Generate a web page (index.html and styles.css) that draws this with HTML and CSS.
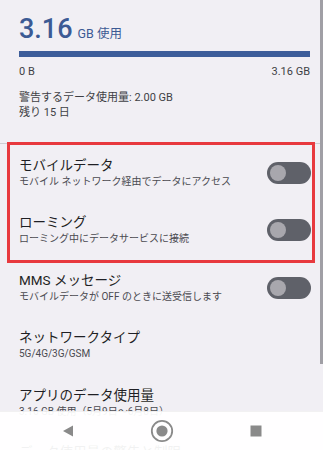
FILE: index.html
```html
<!DOCTYPE html>
<html lang="ja">
<head>
<meta charset="utf-8">
<link rel="stylesheet" href="styles.css">
</head>
<body>
<div class="page">
  <section class="usage">
    <div class="amount"><span class="num">3.16</span><span class="unit">GB 使用</span></div>
    <div class="bar"></div>
    <div class="scale"><span>0 B</span><span>3.16 GB</span></div>
    <div class="warn">
      <div>警告するデータ使用量: 2.00 GB</div>
      <div>残り 15 日</div>
    </div>
  </section>
  <div class="divider"></div>
  <div class="group highlight">
    <div class="row">
      <div class="text"><div class="title">モバイルデータ</div><div class="sub">モバイル ネットワーク経由でデータにアクセス</div></div>
      <div class="switch"><span class="thumb"></span></div>
    </div>
    <div class="row">
      <div class="text"><div class="title">ローミング</div><div class="sub">ローミング中にデータサービスに接続</div></div>
      <div class="switch"><span class="thumb"></span></div>
    </div>
  </div>
  <div class="row">
    <div class="text"><div class="title">MMS メッセージ</div><div class="sub">モバイルデータが OFF のときに送受信します</div></div>
    <div class="switch"><span class="thumb"></span></div>
  </div>
  <div class="row">
    <div class="text"><div class="title">ネットワークタイプ</div><div class="sub">5G/4G/3G/GSM</div></div>
  </div>
  <div class="row">
    <div class="text"><div class="title">アプリのデータ使用量</div><div class="sub">3.16 GB 使用（5月9日～6月8日）</div></div>
  </div>
  <div class="row">
    <div class="text"><div class="title">データ使用量の警告と制限</div><div class="sub"></div></div>
  </div>
</div>
<div class="scrollbar"></div>
<nav class="navbar">
  <div class="nav-item"><svg width="12" height="12" viewBox="0 0 12 12"><path d="M11 0.5 L11 11.5 L1 6 Z" fill="#8a8a8a"/></svg></div>
  <div class="nav-item"><svg width="24" height="24" viewBox="0 0 24 24"><circle cx="12" cy="12" r="10.2" fill="none" stroke="#8a8a8a" stroke-width="1.8"/><circle cx="12" cy="12" r="5.6" fill="#8a8a8a"/></svg></div>
  <div class="nav-item"><svg width="12" height="12" viewBox="0 0 12 12"><rect x="0.5" y="0.5" width="11" height="11" fill="#8a8a8a"/></svg></div>
</nav>
</body>
</html>
```

FILE: styles.css
```css
html, body {
  margin: 0;
  padding: 0;
  height: 450px;
  overflow: hidden;
  background: #f1eff4;
}
body {
  font-family: Roboto, "Noto Sans CJK JP", sans-serif;
  color: #1f1f24;
}
.page {
  display: flex;
  flex-direction: column;
}
.usage {
  padding: 13px 13px 0 19px;
}
.amount {
  display: flex;
  align-items: baseline;
  height: 32px;
  line-height: 32px;
  color: #3c5a94;
}
.num {
  font-size: 27px;
  font-weight: 500;
}
.unit {
  font-size: 12.5px;
  margin-left: 5px;
}
.bar {
  margin-top: 6px;
  height: 6px;
  background: #3d5d9a;
}
.scale {
  display: flex;
  justify-content: space-between;
  margin-top: 7px;
  font-size: 11px;
  line-height: 16px;
  color: #3f3f45;
}
.warn {
  margin-top: 10px;
  font-size: 11px;
  line-height: 15px;
  color: #3f3f45;
}
.divider {
  margin-top: 23px;
  height: 1px;
  background: #cfcdd3;
}
.group {
  position: relative;
}
.highlight::after {
  content: "";
  position: absolute;
  left: 7px;
  right: 8px;
  top: -2px;
  bottom: -4px;
  border: 3px solid #e8393e;
  pointer-events: none;
}
.row {
  display: flex;
  align-items: center;
  justify-content: space-between;
  height: 57.5px;
  padding: 0 12px 0 19px;
}
.title {
  font-size: 13.5px;
  line-height: 17px;
  color: #1f1f24;
}
.sub {
  font-size: 10px;
  line-height: 15px;
  color: #4a4a50;
  min-height: 15px;
}
.switch {
  position: relative;
  width: 44px;
  height: 22px;
  border-radius: 11px;
  background: #5f6169;
  flex: none;
}
.thumb {
  position: absolute;
  left: 3px;
  top: 3px;
  width: 16px;
  height: 16px;
  border-radius: 50%;
  background: #a8a7ad;
}
.scrollbar {
  position: fixed;
  right: 0;
  top: 0;
  width: 3.5px;
  height: 364px;
  background: #a09fa5;
}
.navbar {
  position: fixed;
  left: 0;
  right: 0;
  bottom: 0;
  height: 38px;
  display: flex;
  justify-content: center;
  align-items: center;
  background: rgba(255, 255, 255, 0.94);
  border-top: 1px solid rgba(0, 0, 0, 0.05);
}
.nav-item {
  width: 94px;
  display: flex;
  justify-content: center;
  align-items: center;
}
.nav-item svg {
  display: block;
}
```
